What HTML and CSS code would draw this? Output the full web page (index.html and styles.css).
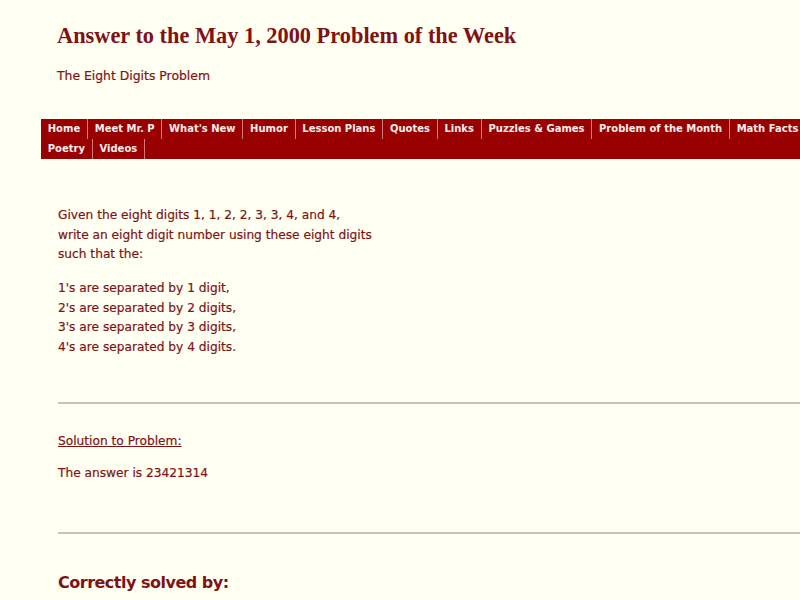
FILE: index.html
```html
<!DOCTYPE html>
<html lang="en">
<head>
<meta charset="utf-8">
<title>Answer to the May 1, 2000 Problem of the Week</title>
<link rel="stylesheet" href="styles.css">
</head>
<body>
<header class="page-header">
  <h1 class="title">Answer to the May 1, 2000 Problem of the Week</h1>
  <p class="subtitle">The Eight Digits Problem</p>
</header>
<nav class="nav">
  <ul class="nav-list">
    <li class="nav-item"><a href="#">Home</a></li>
    <li class="nav-item"><a href="#">Meet Mr. P</a></li>
    <li class="nav-item"><a href="#">What's New</a></li>
    <li class="nav-item"><a href="#">Humor</a></li>
    <li class="nav-item"><a href="#">Lesson Plans</a></li>
    <li class="nav-item"><a href="#">Quotes</a></li>
    <li class="nav-item"><a href="#">Links</a></li>
    <li class="nav-item"><a href="#">Puzzles &amp; Games</a></li>
    <li class="nav-item"><a href="#">Problem of the Month</a></li>
    <li class="nav-item"><a href="#">Math Facts</a></li>
    <li class="nav-break" aria-hidden="true"></li>
    <li class="nav-item"><a href="#">Poetry</a></li>
    <li class="nav-item"><a href="#">Videos</a></li>
  </ul>
</nav>
<main class="content">
  <p class="text problem">Given the eight digits 1, 1, 2, 2, 3, 3, 4, and 4,<br>write an eight digit number using these eight digits<br>such that the:</p>
  <p class="text rules">1's are separated by 1 digit,<br>2's are separated by 2 digits,<br>3's are separated by 3 digits,<br>4's are separated by 4 digits.</p>
  <hr class="rule-line first">
  <p class="text solution-label"><span class="underline">Solution to Problem:</span></p>
  <p class="text answer">The answer is 23421314</p>
  <hr class="rule-line second">
  <h2 class="solved">Correctly solved by:</h2>
</main>
</body>
</html>
```
FILE: styles.css
```css
html, body {
  margin: 0;
  padding: 0;
  background: #fffff2;
  overflow: hidden;
}
body {
  color: #800000;
  font-family: "DejaVu Sans", sans-serif;
}
.page-header {
  padding: 23px 0 0 57px;
}
.title {
  margin: 0;
  font-family: "Liberation Serif", "Times New Roman", serif;
  font-weight: bold;
  font-size: 22.35px;
  line-height: 26px;
  color: #7f1215;
}
.subtitle {
  margin: 19px 0 0 0;
  font-size: 12.4px;
  line-height: 16px;
  color: #7f1215;
  -webkit-text-stroke: 0.2px #7f1215;
}
.nav {
  margin: 35px 0 0 41px;
  background: #990000;
  overflow: hidden;
}
.nav-list {
  list-style: none;
  margin: 0;
  padding: 0;
  width: 900px;
  display: flex;
  flex-wrap: wrap;
}
.nav-item {
  flex-shrink: 0;
  border-right: 1px solid rgba(255, 220, 220, 0.55);
}
.nav-item a {
  display: block;
  padding: 0 6.75px;
  height: 20px;
  line-height: 20px;
  font-size: 10px;
  font-weight: bold;
  color: #fbeeee;
  text-decoration: none;
  white-space: nowrap;
}
.nav-break {
  flex-basis: 100%;
  height: 0;
}
.content {
  padding: 47px 0 0 58px;
}
.text {
  margin: 0;
  font-size: 12.2px;
  line-height: 19.5px;
  color: #7d1315;
  -webkit-text-stroke: 0.2px #7d1315;
}
.rules {
  margin-top: 14.5px;
}
.rule-line {
  margin: 45px 0 0 0;
  border: 0;
  height: 2px;
  background: #c4c4c0;
}
.solution-label {
  margin-top: 28px;
}
.underline {
  text-decoration: underline;
}
.answer {
  margin-top: 12.5px;
}
.rule-line.second {
  margin-top: 48.5px;
}
.solved {
  margin: 37.5px 0 0 0;
  font-size: 16px;
  line-height: 22px;
  letter-spacing: -0.5px;
  font-weight: bold;
  color: #7d1315;
}
```
